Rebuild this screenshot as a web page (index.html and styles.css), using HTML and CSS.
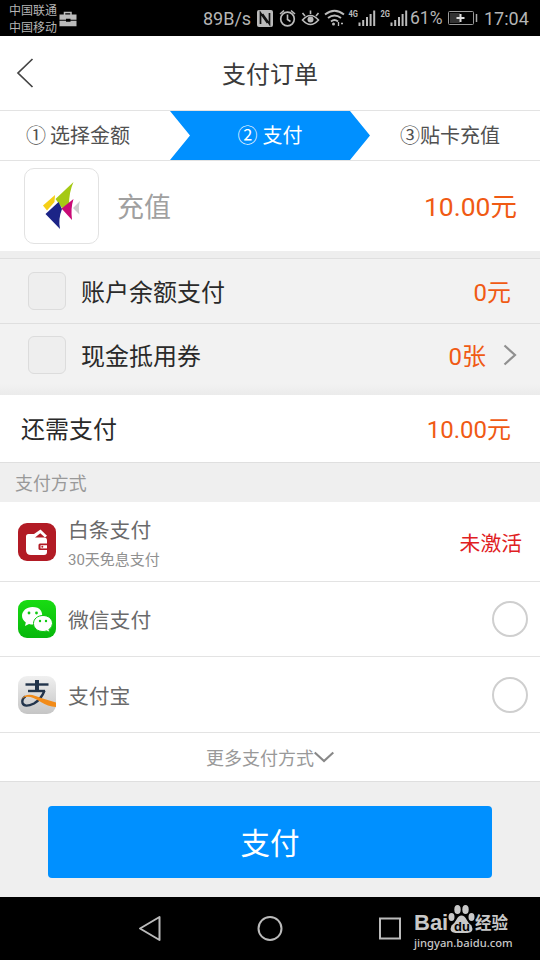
FILE: index.html
```html
<!DOCTYPE html>
<html lang="zh-CN">
<head>
<meta charset="utf-8">
<title>支付订单</title>
<link rel="stylesheet" href="styles.css">
</head>
<body>
<div class="status">
  <div class="carriers"><span>中国联通</span><span>中国移动</span></div>
  <svg class="case" width="18" height="16" viewBox="0 0 18 16"><path d="M5.500 4V1.500h6.500V4" fill="none" stroke="#bbb" stroke-width="1.500"/><path d="M.5 3.500h17v5.300h-6v-1H7v1H.5zM.5 9.800H7v1h4.500v-1h6V15.300H.5z" fill="#bbb"/></svg>
  <span class="speed">89B/s</span>
  <svg class="icons" width="152" height="24" viewBox="256 6 152 24" fill="none" stroke="#bbb">
    <rect x="257" y="10" width="16" height="17" rx="2" fill="#bbb" stroke="none"/>
    <path d="M260.500 24V13l7 10M269.500 13v11l-7-10" stroke="#111" stroke-width="1.700"/>
    <circle cx="287.500" cy="19" r="6.800" stroke-width="1.700"/><path d="M287.500 14.500v5l3 2M280 14l4-3.500M295 14l-4-3.500" stroke-width="1.600"/>
    <path d="M302.500 20q8-9 16 0q-8 9-16 0zM310.500 14v-3.500M305 16l-2.500-3M316 16l2.500-3" stroke-width="1.600"/><circle cx="310.500" cy="19.500" r="3" fill="#bbb" stroke="none"/>
    <path d="M325 14.500q9.500-7.500 19 0M328 18q6.500-5 13 0M331 21.500q3.500-2.800 7 0" stroke-width="1.900"/><circle cx="333.500" cy="24" r="1.500" fill="#bbb" stroke="none"/><path d="M338.500 22v4M341 23.500h2" stroke-width="1.300"/>
    <path d="M359.500 22.500V26M363.200 20v6M367 17v9M370.600 14v12M374.200 10.500V26M391.500 22.500V26M395.200 20v6M399 17v9M402.600 14v12M406.200 10.500V26" stroke-width="2"/>
    <text class="net" x="348.500" y="17" textLength="9.500" lengthAdjust="spacingAndGlyphs">4G</text><text class="net" x="380.500" y="17" textLength="9.500" lengthAdjust="spacingAndGlyphs">2G</text>
  </svg>
  <span class="percent">61%</span>
  <svg class="battery" width="32" height="16" viewBox="0 0 32 16"><rect x="1.500" y="1.500" width="25" height="13" rx="1" fill="none" stroke="#999"/><rect x="3" y="3" width="10" height="10" fill="#333"/><path d="M9.500 8h8M13.500 4v8" stroke="#ddd" stroke-width="2"/><path d="M29.500 4v8" stroke="#aaa" stroke-width="1.500"/></svg>
  <span class="clock">17:04</span>
</div>
<header class="header">
  <svg class="back" width="18" height="32" viewBox="0 0 18 32"><path d="M16.500 2L2 16l14.500 14" fill="none" stroke="#444" stroke-width="1.700"/></svg>
  <h1>支付订单</h1>
</header>
<div class="steps">
  <div class="step first">① 选择金额</div>
  <div class="step active">② 支付</div>
  <div class="step last">③贴卡充值</div>
</div>
<div class="product">
  <div class="logo"><svg width="40" height="50" viewBox="0 0 40 50"><path d="M31.500 1L13.500 18l6.500 9 7-3Q27 11 31.500 1z" fill="#a5c914"/><path d="M13 14L1 24.500l4 5L12.500 21z" fill="#f5cf16"/><path d="M16.500 21L3.500 33l14.500 15Q16 38 20 28z" fill="#1c2487"/><path d="M31.500 18L19.500 27.500 30 39Q28.500 27 31.500 18z" fill="#c90a76"/><path d="M38 20L31 27l6.500 6.500Q36 26 38 20z" fill="#ccc"/></svg></div>
  <span class="name">充值</span>
  <span class="price">10.00元</span>
</div>
<div class="gap"></div>
<div class="deduct">
  <div class="option"><i class="box"></i><span>账户余额支付</span><b class="amount">0元</b></div>
  <div class="option"><i class="box"></i><span>现金抵用券</span><b class="amount">0张</b><svg class="next" width="14" height="22" viewBox="0 0 14 22"><path d="M1.500 1.500L12 11 1.500 20.500" fill="none" stroke="#909090" stroke-width="2.200"/></svg></div>
</div>
<div class="remain"><span>还需支付</span><b class="amount">10.00元</b></div>
<h2 class="section">支付方式</h2>
<div class="method credit">
  <svg class="app" width="38" height="38" viewBox="0 0 38 38"><rect width="38" height="38" rx="9" fill="#b21b25"/><path d="M8 13.500q0-2.500 2.500-2.500H16l6.500-4.500 6.500 6.300-2 1.700-4.700-4.300-5.300 4.300H26q3 0 3 3V29q0 3-3 3H13q-5 0-5-5z" fill="#fff"/><path d="M29.500 20.500H22q-1.500 0-1.500 1.500v3.500q0 1.500 1.500 1.500h7.500z" fill="#b21b25"/><path d="M22.500 22.200H29v3.200h-6.500z" fill="#fff"/><circle cx="24.300" cy="23.800" r="1" fill="#b21b25"/></svg>
  <div class="label"><span>白条支付</span><small>30天免息支付</small></div>
  <span class="inactive">未激活</span>
</div>
<div class="method wechat">
  <svg class="app" width="38" height="38" viewBox="0 0 38 38"><defs><linearGradient id="g" x2="0" y2="1"><stop stop-color="#19dc12"/><stop offset="1" stop-color="#07b70c"/></linearGradient></defs><rect width="38" height="38" rx="9" fill="url(#g)"/><path d="M14.500 7C8.500 7 4 11 4 15.800c0 2.700 1.500 5 3.800 6.700L7 26l4-2q8 2 13-4Q26 7 14.500 7z" fill="#fff"/><path d="M25 15.500c-5.500 0-9.500 3.500-9.500 8s4 8 9.500 8q2 0 3.500-.6L32 32.500l-1-3q3.500-2.500 3.500-6c0-4.500-4-8-9.500-8z" fill="#fff" stroke="#0dc60f"/><g fill="#10ca10"><circle cx="11" cy="13" r="1.400"/><circle cx="18.500" cy="13" r="1.400"/><circle cx="22" cy="21" r="1.200"/><circle cx="28" cy="21" r="1.200"/></g></svg>
  <span class="label">微信支付</span><i class="radio"></i>
</div>
<div class="method alipay">
  <svg class="app" width="38" height="38" viewBox="0 0 38 38"><defs><linearGradient id="h" x2="0" y2="1"><stop stop-color="#f0f0f0"/><stop offset="1" stop-color="#c5c5c5"/></linearGradient></defs><rect width="38" height="38" rx="9" fill="url(#h)"/><g fill="none" stroke="#22344b"><path d="M7.500 8.500h23" stroke-width="2.400"/><path d="M19 4v11" stroke-width="4"/><path d="M10 15h17" stroke-width="2.400"/><path d="M26.500 14.500Q23.500 23 16 27.500 6.500 32 4.500 27 3.500 23 7.500 20.500" stroke-width="2.400"/></g><path d="M3.500 23Q8 16.500 17.500 20T38 26.500V31Q30 30.500 22 25.500 10 17.500 3.500 23z" fill="#f28b18"/></svg>
  <span class="label">支付宝</span><i class="radio"></i>
</div>
<div class="more"><span>更多支付方式</span><svg width="20" height="12" viewBox="0 0 20 12"><path d="M.7 1.500L10 10l9.300-8.500" fill="none" stroke="#888" stroke-width="2.200"/></svg></div>
<main class="submit"><button>支付</button></main>
<nav class="nav">
  <svg class="keys" width="264" height="30" viewBox="138 914 264 30" fill="none" stroke="#bbb" stroke-width="2"><path d="M140 928.500L159.500 917v23z" stroke-linejoin="round"/><circle cx="270" cy="928.500" r="11.500"/><rect x="380" y="918.500" width="20" height="20"/></svg>
  <div class="mark">
    <div class="brand"><span class="bai">Bai</span><svg width="28" height="32" viewBox="0 0 28 32"><g fill="#c8c8c8"><ellipse cx="4.500" cy="14" rx="3" ry="4"/><ellipse cx="10.500" cy="6.500" rx="3.200" ry="4.500"/><ellipse cx="18.500" cy="6.500" rx="3.200" ry="4.500"/><ellipse cx="24.500" cy="14" rx="3" ry="4"/><path d="M14.500 12.500q3 0 5 4t5 6q3 7-4 7.500h-12q-7-.5-4-7.500Q7.500 20.500 9.500 16.500t5-4z"/></g><text class="du" x="7" y="28">du</text></svg><span class="jing">经验</span></div>
    <div class="site">jingyan.baidu.com</div>
  </div>
</nav>
</body>
</html>
```
FILE: styles.css
```css
* { box-sizing: border-box; }
body { margin: 0; width: 540px; height: 960px; overflow: hidden; background: #efefef; color: #2a2a2a; font-family: Roboto, "Noto Sans CJK SC", sans-serif; font-weight: 400; }
svg { display: block; flex: none; }
h1, h2, b, small, i { margin: 0; font-weight: inherit; font-style: normal; }
span, b { white-space: nowrap; }

.status { height: 36px; background: #000; color: #b5b5b5; display: flex; align-items: center; padding-left: 9px; font-size: 18px; }
.carriers { display: flex; flex-direction: column; width: 50px; font-size: 12px; line-height: 17px; padding-top: 4px; }
.case { margin-top: 1px; }
.speed { width: 53px; margin-left: 126px; }
.net { font: 700 9px Roboto, sans-serif; fill: #bbb; stroke: none; }
.percent { width: 37px; margin-left: 2px; font-size: 17.500px; }
.battery { margin-right: 5px; }
.clock { font-size: 18px; }

.header { height: 74px; background: #fff; display: grid; grid-template-columns: 35px 1fr 35px; align-items: center; }
.back { margin-left: 16px; }
.header h1 { font-size: 24px; line-height: 36px; text-align: center; color: #3a3a3a; padding-top: 4px; }

.steps { height: 51px; background: #fff; border-top: 1px solid #e3e3e3; border-bottom: 1px solid #e3e3e3; display: flex; font-size: 20px; line-height: 50px; color: #505050; }
.step { white-space: nowrap; }
.first { width: 170px; padding-left: 26px; word-spacing: -1px; }
.active { width: 200px; background: #0090ff; color: #fff; text-align: center; clip-path: polygon(0 0, 90% 0, 100% 50%, 90% 100%, 0 100%, 10% 50%); }
.last { padding-left: 30px; }

.product { height: 90px; background: #fff; display: flex; align-items: center; padding: 0 23px 0 24px; font-size: 27px; }
.logo { width: 75px; height: 76px; border: 1px solid #e2e2e2; border-radius: 10px; display: flex; align-items: center; justify-content: center; }
.name { margin-left: 18px; color: #a0a0a0; padding-bottom: 1px; }
.price { margin-left: auto; color: #f05a14; font-size: 26.500px; padding-bottom: 3px; }
.gap { height: 7px; background: #eee; }

.deduct { height: 137px; background: linear-gradient(#f2f2f2 126px, #ebebeb); font-size: 24px; }
.option { height: 65px; border-top: 1px solid #dfdfdf; display: flex; align-items: center; padding: 0 29px 0 28px; }
.option span, .option b { padding-bottom: 2px; }
.option + .option { padding-right: 23px; }
.option + .option .box { margin-top: -2px; }
.option + .option span, .option + .option b { padding-bottom: 4px; }
.box { width: 38px; height: 38px; border: 1px solid #dcdcdc; border-radius: 6px; background: #eee; margin-right: 15px; }
.amount { margin-left: auto; color: #f05a14; }
.next { margin: -2px 0 0 17px; }
.remain { height: 67px; background: #fff; display: flex; align-items: center; padding: 0 29px 2px 21px; font-size: 24px; }

.section { height: 40px; border-top: 1px solid #dfdfdf; padding-left: 15px; color: #999; font-size: 17.900px; line-height: 41px; }
.method { background: #fff; display: flex; align-items: center; padding: 0 12px 0 18px; border-bottom: 1px solid #e3e3e3; font-size: 20.800px; color: #6a6a6a; }
.credit { height: 80px; padding-right: 18px; }
.wechat { height: 75px; }
.alipay { height: 76px; }
.app { margin-right: 12px; }
.label { display: flex; flex-direction: column; }
.label span { line-height: 30px; padding-top: 4px; }
.label small { font-size: 15px; line-height: 24px; color: #909090; padding-top: 2px; }
.inactive { margin-left: auto; color: #e0201f; }
.radio { width: 36px; height: 36px; margin-left: auto; border: 2px solid #cfcfcf; border-radius: 50%; }
.more { height: 49px; background: #fff; border-bottom: 1px solid #dfdfdf; display: flex; align-items: center; justify-content: center; font-size: 18px; color: #999; }

.submit { height: 115px; padding: 24px 48px 0; }
.submit button { display: block; width: 100%; height: 72px; border: 0; border-radius: 4px; padding: 0 0 3px; background: #0090ff; color: #fff; font: inherit; font-size: 29.500px; }
.nav { height: 63px; background: #000; display: flex; align-items: center; padding-left: 138px; }
.mark { width: 110px; margin: -4px 0 0 12px; color: #c8c8c8; }
.brand { display: flex; align-items: flex-end; height: 32px; }
.bai { font: 700 22px/24px "Liberation Sans", sans-serif; width: 33px; }
.jing { font: 700 16.500px/25px "Noto Sans CJK SC", sans-serif; }
.du { font: 700 13px "Liberation Sans", sans-serif; fill: #000; }
.site { font: 500 11.200px/15px "Noto Sans", sans-serif; }
```
